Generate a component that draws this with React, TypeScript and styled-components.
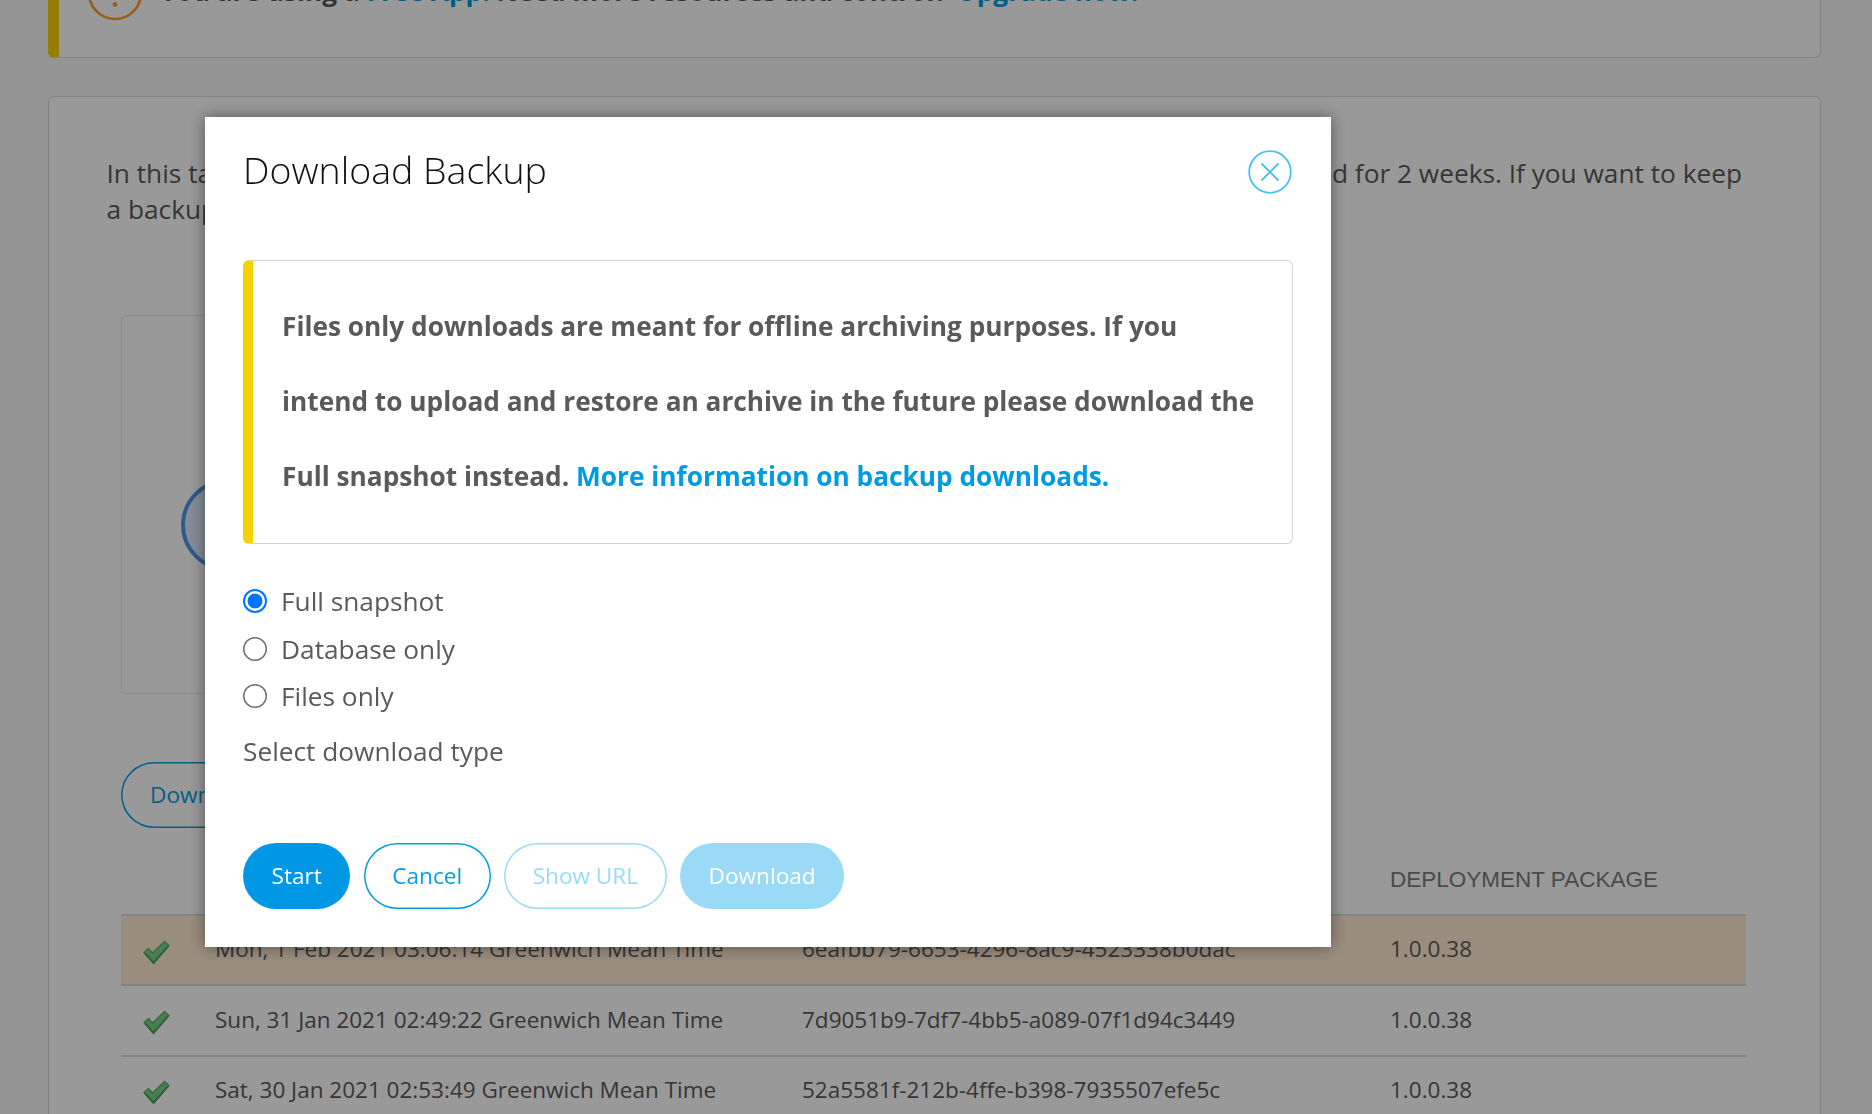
import React, { useState } from "react";
import styled, { createGlobalStyle } from "styled-components";

const sans = `"Open Sans", "Noto Sans", sans-serif`;

const GlobalStyle = createGlobalStyle`
  *, *::before, *::after { box-sizing: border-box; }
  html, body { margin: 0; height: 1114px; overflow: hidden; background: #f7f7f7; }
  body { font-family: ${sans}; color: #5a5a5a; }
  p, h2 { margin: 0; font-weight: 400; }
`;

const Page = styled.main`
  width: 1872px;
  height: 1114px;
  padding: 0 51px 0 48px;
  overflow: hidden;
  display: flex;
  flex-direction: column;
`;

const Notice = styled.section`
  flex: none;
  height: 58px;
  border: 1px solid #dadada;
  border-top: 0;
  border-left: 11px solid #f7d100;
  border-radius: 0 0 6px 6px;
  background: #fff;
  display: flex;
  align-items: flex-start;
  padding-left: 28px;
`;

const NoticeIcon = styled.svg`
  flex: none;
  width: 56px;
  height: 56px;
  margin-top: -35px;
`;

const NoticeText = styled.p`
  margin: -27px 0 0 17px;
  font-size: 26.25px;
  line-height: 36px;
  font-weight: 700;
  white-space: pre;
`;

const Link = styled.a`
  color: #009be1;
  text-decoration: none;
`;

const UpgradeLink = styled(Link)`
  margin-left: 3px;
`;

const Panel = styled.section`
  flex: none;
  margin-top: 38px;
  height: 1100px;
  padding: 58px 74px 0 57.5px;
  border: 1px solid #dadada;
  border-radius: 6px;
  background: #fff;
`;

const IntroLine = styled.p`
  display: flex;
  justify-content: space-between;
  padding-right: 4px;
  font-size: 26.25px;
  line-height: 36px;
`;

const Content = styled.div`
  padding-left: 14.5px;
`;

const UsageCard = styled.div`
  margin-top: 88px;
  width: 420px;
  height: 379px;
  padding: 163px 0 0 59px;
  border: 1px solid #ebebeb;
  border-radius: 5px;
`;

const CardIcon = styled.svg`
  display: block;
  width: 92px;
  height: 92px;
`;

const Button = styled.button<{ $filled?: boolean }>`
  height: 66px;
  padding: 0 28.5px;
  border: 0;
  border-radius: 33px;
  background: ${(p) => (p.$filled ? "#0098e5" : "transparent")};
  box-shadow: ${(p) => (p.$filled ? "none" : "inset 0 0 0 1.5px #009fe3")};
  color: ${(p) => (p.$filled ? "#fff" : "#009fe3")};
  font: 400 22.6px/33px ${sans};
  white-space: nowrap;

  &:disabled {
    background: ${(p) => (p.$filled ? "#9bdaf6" : "transparent")};
    box-shadow: ${(p) => (p.$filled ? "none" : "inset 0 0 0 1.5px #9bdaf6")};
    color: ${(p) => (p.$filled ? "#fff" : "#9bdaf6")};
  }
`;

const CardAction = styled(Button)`
  margin-top: 68px;
  padding: 0 29px 2px;
`;

const columns = "94px 587px 588px 1fr";

const TableHead = styled.div`
  display: grid;
  grid-template-columns: ${columns};
  height: 86px;
  padding-top: 39px;
  color: #7c7c7c;
  font: 400 22.5px/26px "Liberation Sans", Arial, sans-serif;
`;

const Row = styled.div<{ $current?: boolean }>`
  display: grid;
  grid-template-columns: ${columns};
  align-items: center;
  height: 70.4px;
  padding-bottom: 2px;
  border-top: 2px solid #dadada;
  background: ${(p) => (p.$current ? "#ffebd2" : "transparent")};
  font-size: 22.5px;
  line-height: 30px;
  white-space: nowrap;
`;

const Tick = styled.svg`
  width: 30px;
  height: 30px;
  margin: 7px 0 0 20px;
`;

const Backdrop = styled.div`
  position: fixed;
  inset: 0;
  background: rgba(0, 0, 0, 0.4);
`;

const Dialog = styled.div`
  position: absolute;
  left: 205px;
  top: 117px;
  width: 1126px;
  height: 829.5px;
  padding: 33px 38px 0 38px;
  background: #fff;
  box-shadow: 0 0 15px rgba(0, 0, 0, 0.45);
`;

const DialogHeader = styled.header`
  display: flex;
  justify-content: space-between;
  height: 110px;
`;

const Title = styled.h2`
  font-size: 37.5px;
  line-height: 40px;
  font-weight: 300;
  color: #111;
`;

const CloseButton = styled.button`
  width: 44px;
  height: 44px;
  margin-right: 1px;
  padding: 0;
  border: 0;
  background: none;
`;

const Alert = styled.div`
  height: 284px;
  padding: 28px 0 0 29px;
  border: 1px solid #d3d3d3;
  border-left: 10.5px solid #f7d100;
  border-radius: 6px;
  font-size: 26.25px;
  line-height: 75px;
  font-weight: 700;
  white-space: nowrap;
`;

const Options = styled.div`
  display: flex;
  flex-direction: column;
  margin-top: 33.5px;
  font-size: 26.25px;
  line-height: 36px;
`;

const Option = styled.label`
  display: flex;
  align-items: center;
  gap: 14px;
  height: 47.4px;
`;

const Radio = styled.input`
  appearance: none;
  width: 24px;
  height: 24px;
  margin: 0;
  border-radius: 50%;
  box-shadow: inset 0 0 0 1.5px #707070;

  &:checked {
    background: radial-gradient(circle, #0075ff 7px, transparent 7.8px);
    box-shadow: inset 0 0 0 2px #0075ff;
  }
`;

const Hint = styled.p`
  margin-top: 13px;
  font-size: 26.25px;
  line-height: 36px;
`;

const Actions = styled.div`
  display: flex;
  gap: 13.5px;
  margin-top: 74px;
`;

const backups = [
  { time: "Mon, 1 Feb 2021 03:06:14 Greenwich Mean Time", id: "6eafbb79-6653-4296-8ac9-4523338b0dac", version: "1.0.0.38" },
  { time: "Sun, 31 Jan 2021 02:49:22 Greenwich Mean Time", id: "7d9051b9-7df7-4bb5-a089-07f1d94c3449", version: "1.0.0.38" },
  { time: "Sat, 30 Jan 2021 02:53:49 Greenwich Mean Time", id: "52a5581f-212b-4ffe-b398-7935507efe5c", version: "1.0.0.38" },
];

const TickIcon = () => (
  <Tick viewBox="0 0 30 30">
    <path d="M3 14.5 L7.5 10.5 L11.5 15 L23.5 3.5 L28 7.5 L12.5 25.5 Z" fill="#78d482" stroke="#5cb06a" strokeWidth="1.3" strokeLinejoin="round" />
    <path d="M4.2 15.6 L12.5 24.6 L27.2 8.2" fill="none" stroke="#4a9a58" strokeWidth="1.6" />
  </Tick>
);

const types = ["Full snapshot", "Database only", "Files only"];

export default function App() {
  const [selected, setSelected] = useState(types[0]);
  return (
    <>
      <GlobalStyle />
      <Page>
        <Notice>
          <NoticeIcon viewBox="0 0 56 56">
            <circle cx="28" cy="28" r="26" fill="none" stroke="#ff9c31" strokeWidth="2.6" />
            <path d="M28 15v16" stroke="#ff9c31" strokeWidth="3" />
            <circle cx="28" cy="39.5" r="2.4" fill="#ff9c31" />
          </NoticeIcon>
          <NoticeText>
            You are using a <Link>Free App!</Link> Need more resources and control?{" "}
            <UpgradeLink>Upgrade now!</UpgradeLink>
          </NoticeText>
        </Notice>
        <Panel>
          <IntroLine>
            <span>In this tab</span>
            <span>Backups are retained for 2 weeks. If you want to keep</span>
          </IntroLine>
          <IntroLine>a backup longer</IntroLine>
          <Content>
            <UsageCard>
              <CardIcon viewBox="0 0 92 92">
                <circle cx="46" cy="46" r="44" fill="#dde9fb" stroke="#4e96e2" strokeWidth="3.8" />
              </CardIcon>
            </UsageCard>
            <CardAction>Download Backup</CardAction>
            <TableHead>
              <span />
              <span />
              <span />
              <span>DEPLOYMENT PACKAGE</span>
            </TableHead>
            {backups.map((b, i) => (
              <Row key={b.id} $current={i === 0}>
                <TickIcon />
                <span>{b.time}</span>
                <span>{b.id}</span>
                <span>{b.version}</span>
              </Row>
            ))}
          </Content>
        </Panel>
      </Page>
      <Backdrop>
        <Dialog role="dialog">
          <DialogHeader>
            <Title>Download Backup</Title>
            <CloseButton aria-label="Close">
              <svg width="44" height="44" viewBox="0 0 44 44" fill="none" stroke="#45c1f2" strokeWidth="1.8">
                <circle cx="22" cy="22" r="20.8" />
                <path d="M13.5 13.5 L30.5 30.5 M30.5 13.5 L13.5 30.5" />
              </svg>
            </CloseButton>
          </DialogHeader>
          <Alert>
            Files only downloads are meant for offline archiving purposes. If you
            <br />
            intend to upload and restore an archive in the future please download the
            <br />
            Full snapshot instead. <Link>More information on backup downloads.</Link>
          </Alert>
          <Options>
            {types.map((t) => (
              <Option key={t}>
                <Radio type="radio" name="type" checked={selected === t} onChange={() => setSelected(t)} />
                {t}
              </Option>
            ))}
          </Options>
          <Hint>Select download type</Hint>
          <Actions>
            <Button $filled>Start</Button>
            <Button>Cancel</Button>
            <Button disabled>Show URL</Button>
            <Button $filled disabled>Download</Button>
          </Actions>
        </Dialog>
      </Backdrop>
    </>
  );
}
